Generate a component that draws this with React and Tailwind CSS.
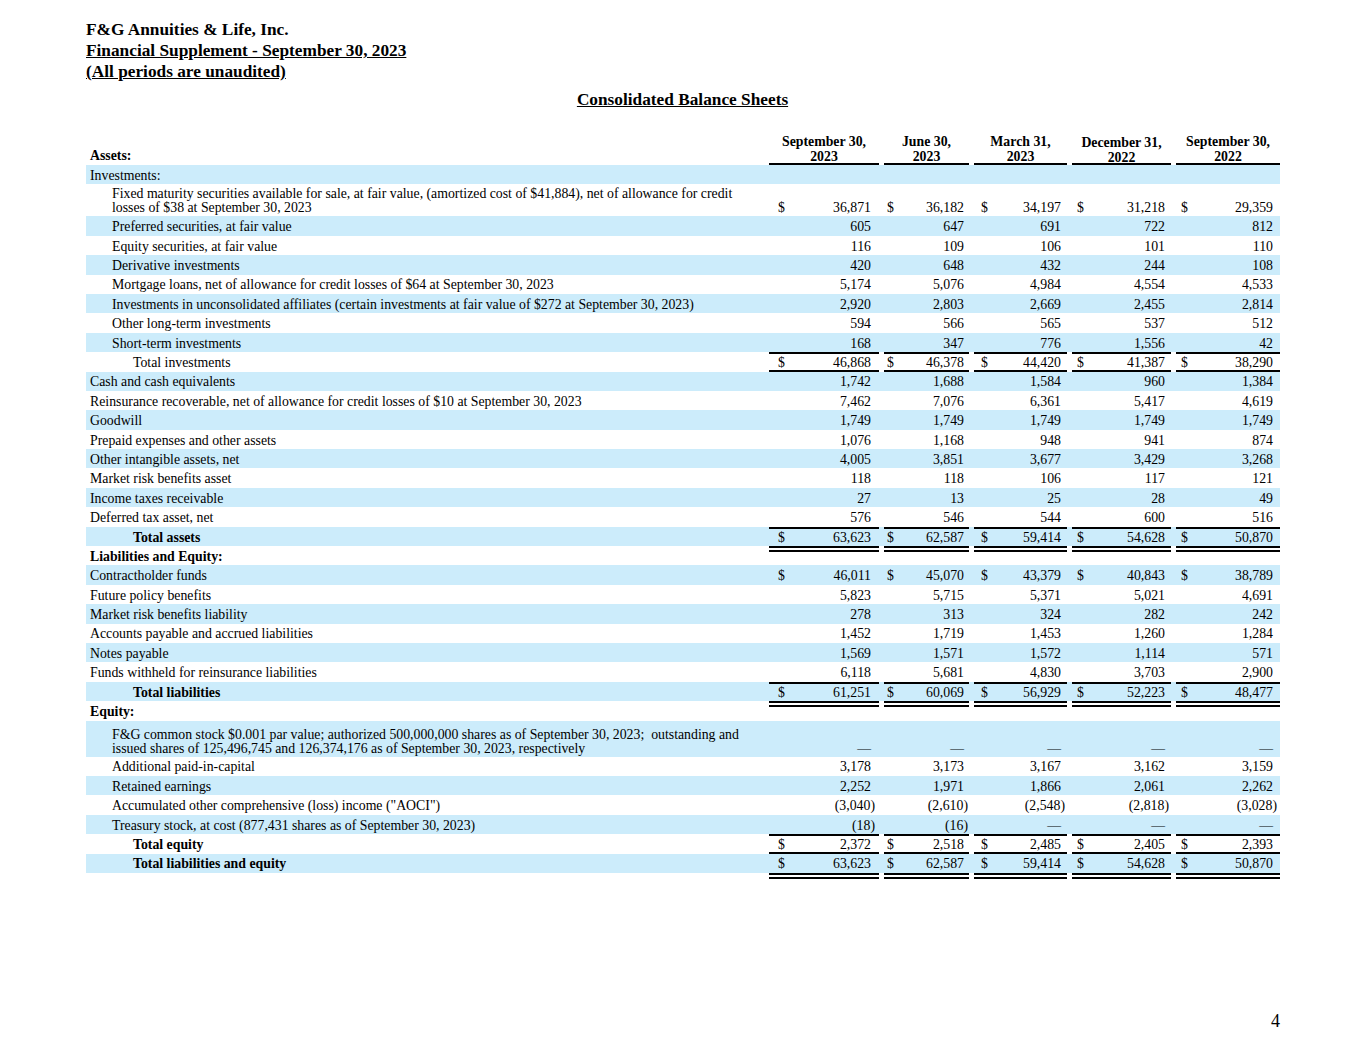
const cols = [
  { box: 'w-[110px]', pl: 'pl-[9px]', pr: 'pr-[8px]' },
  { box: 'w-[85px] ml-[5px]', pl: 'pl-[3px]', pr: 'pr-[5px]' },
  { box: 'w-[93px] ml-[5px]', pl: 'pl-[7px]', pr: 'pr-[6px]' },
  { box: 'w-[99px] ml-[5px]', pl: 'pl-[5px]', pr: 'pr-[6px]' },
  { box: 'w-[104px] ml-[5px]', pl: 'pl-[5px]', pr: 'pr-[7px]' },
]

const headers = [
  ['September 30,', '2023'],
  ['June 30,', '2023'],
  ['March 31,', '2023'],
  ['December 31,', '2022'],
  ['September 30,', '2022'],
]

const indents = ['pl-[4px]', 'pl-[26px]', 'pl-[47px]']

const rows = [
  { label: 'Investments:', indent: 0 },
  {
    label: ['Fixed maturity securities available for sale, at fair value, (amortized cost of $41,884), net of allowance for credit', 'losses of $38 at September 30, 2023'],
    indent: 1, tall: 'h-[32px]', dollar: true,
    vals: ['36,871', '36,182', '34,197', '31,218', '29,359'],
  },
  { label: 'Preferred securities, at fair value', indent: 1, vals: ['605', '647', '691', '722', '812'] },
  { label: 'Equity securities, at fair value', indent: 1, vals: ['116', '109', '106', '101', '110'] },
  { label: 'Derivative investments', indent: 1, vals: ['420', '648', '432', '244', '108'] },
  { label: 'Mortgage loans, net of allowance for credit losses of $64 at September 30, 2023', indent: 1, vals: ['5,174', '5,076', '4,984', '4,554', '4,533'] },
  { label: 'Investments in unconsolidated affiliates (certain investments at fair value of $272 at September 30, 2023)', indent: 1, vals: ['2,920', '2,803', '2,669', '2,455', '2,814'] },
  { label: 'Other long-term investments', indent: 1, vals: ['594', '566', '565', '537', '512'] },
  { label: 'Short-term investments', indent: 1, vals: ['168', '347', '776', '1,556', '42'] },
  { label: 'Total investments', indent: 2, dollar: true, top: true, bottom: 'single', vals: ['46,868', '46,378', '44,420', '41,387', '38,290'] },
  { label: 'Cash and cash equivalents', indent: 0, vals: ['1,742', '1,688', '1,584', '960', '1,384'] },
  { label: 'Reinsurance recoverable, net of allowance for credit losses of $10 at September 30, 2023', indent: 0, vals: ['7,462', '7,076', '6,361', '5,417', '4,619'] },
  { label: 'Goodwill', indent: 0, vals: ['1,749', '1,749', '1,749', '1,749', '1,749'] },
  { label: 'Prepaid expenses and other assets', indent: 0, vals: ['1,076', '1,168', '948', '941', '874'] },
  { label: 'Other intangible assets, net', indent: 0, vals: ['4,005', '3,851', '3,677', '3,429', '3,268'] },
  { label: 'Market risk benefits asset', indent: 0, vals: ['118', '118', '106', '117', '121'] },
  { label: 'Income taxes receivable', indent: 0, vals: ['27', '13', '25', '28', '49'] },
  { label: 'Deferred tax asset, net', indent: 0, vals: ['576', '546', '544', '600', '516'] },
  { label: 'Total assets', indent: 2, bold: true, dollar: true, top: true, bottom: 'double', vals: ['63,623', '62,587', '59,414', '54,628', '50,870'] },
  { label: 'Liabilities and Equity:', indent: 0, bold: true },
  { label: 'Contractholder funds', indent: 0, dollar: true, vals: ['46,011', '45,070', '43,379', '40,843', '38,789'] },
  { label: 'Future policy benefits', indent: 0, vals: ['5,823', '5,715', '5,371', '5,021', '4,691'] },
  { label: 'Market risk benefits liability', indent: 0, vals: ['278', '313', '324', '282', '242'] },
  { label: 'Accounts payable and accrued liabilities', indent: 0, vals: ['1,452', '1,719', '1,453', '1,260', '1,284'] },
  { label: 'Notes payable', indent: 0, vals: ['1,569', '1,571', '1,572', '1,114', '571'] },
  { label: 'Funds withheld for reinsurance liabilities', indent: 0, vals: ['6,118', '5,681', '4,830', '3,703', '2,900'] },
  { label: 'Total liabilities', indent: 2, bold: true, dollar: true, top: true, bottom: 'double', vals: ['61,251', '60,069', '56,929', '52,223', '48,477'] },
  { label: 'Equity:', indent: 0, bold: true },
  {
    label: ['F&G common stock $0.001 par value; authorized 500,000,000 shares as of September 30, 2023;\u00a0 outstanding and', 'issued shares of 125,496,745 and 126,374,176 as of September 30, 2023, respectively'],
    indent: 1, tall: 'h-[36px]',
    vals: ['—', '—', '—', '—', '—'],
  },
  { label: 'Additional paid-in-capital', indent: 1, vals: ['3,178', '3,173', '3,167', '3,162', '3,159'] },
  { label: 'Retained earnings', indent: 1, vals: ['2,252', '1,971', '1,866', '2,061', '2,262'] },
  { label: 'Accumulated other comprehensive (loss) income ("AOCI")', indent: 1, vals: ['(3,040)', '(2,610)', '(2,548)', '(2,818)', '(3,028)'] },
  { label: 'Treasury stock, at cost (877,431 shares as of September 30, 2023)', indent: 1, vals: ['(18)', '(16)', '—', '—', '—'] },
  { label: 'Total equity', indent: 2, bold: true, dollar: true, top: true, bottom: 'single', vals: ['2,372', '2,518', '2,485', '2,405', '2,393'] },
  { label: 'Total liabilities and equity', indent: 2, bold: true, dollar: true, bottom: 'double', vals: ['63,623', '62,587', '59,414', '54,628', '50,870'] },
]

const Value = ({ v }) => {
  if (v.startsWith('(')) return <span className="-mr-[4px]">{v}</span>
  return <span>{v}</span>
}

const Row = ({ r, shade }) => {
  const tall = !!r.tall
  const valAlign = tall
    ? 'items-end pb-[1px] leading-[14px]'
    : r.top && r.bottom === 'double'
      ? 'items-center pt-[1px]'
      : 'items-center pt-[3px]'
  return (
    <div className={`flex ${r.tall || 'h-[19.4px]'} ${shade ? 'bg-[#ccecfb]' : ''}`}>
      <div
        className={`w-[683px] shrink-0 flex ${tall ? 'items-end pb-[1px] leading-[14px]' : 'items-center pt-[3px]'} ${indents[r.indent]} ${r.bold ? 'font-bold' : ''}`}
      >
        {Array.isArray(r.label) ? (
          <div>
            {r.label[0]}
            <br />
            {r.label[1]}
          </div>
        ) : (
          r.label
        )}
      </div>
      {r.vals &&
        cols.map((c, i) => (
          <div
            key={i}
            className={`${c.box} ${c.pl} ${c.pr} shrink-0 flex justify-between ${valAlign} ${r.top ? 'border-t-2 border-black' : ''} ${r.bottom === 'single' ? 'border-b-2 border-black' : ''} ${r.bottom === 'double' ? 'h-[25.4px] border-b-[6px] border-double border-black' : ''}`}
          >
            <span>{r.dollar ? '$' : ''}</span>
            <Value v={r.vals[i]} />
          </div>
        ))}
    </div>
  )
}

export default function App() {
  return (
    <div className="w-[1365px] min-h-[1055px] bg-white text-black font-['Liberation_Serif',serif]">
      <div className="pl-[86px] pt-[19px] text-[17.3px] leading-[21px] font-bold">
        <div>F&amp;G Annuities &amp; Life, Inc.</div>
        <div className="underline">Financial Supplement - September 30, 2023</div>
        <div className="underline">(All periods are unaudited)</div>
      </div>
      <div className="mt-[7px] text-center text-[17.3px] leading-[21px] font-bold underline">
        Consolidated Balance Sheets
      </div>

      <div className="ml-[86px] w-[1194px] text-[13.8px]">
        <div className="flex items-end h-[55px]">
          <div className="w-[683px] shrink-0 pl-[4px] pb-[2px] leading-[15px] font-bold">Assets:</div>
          {cols.map((c, i) => (
            <div key={i} className={`${c.box} shrink-0 border-b-2 border-black text-center font-bold leading-[15px]`}>
              <div className={i === 3 ? 'translate-y-[2px]' : 'translate-y-[1px]'}>
                <div>{headers[i][0]}</div>
                <div>{headers[i][1]}</div>
              </div>
            </div>
          ))}
        </div>
        {rows.map((r, i) => (
          <Row key={i} r={r} shade={i % 2 === 0} />
        ))}
      </div>

      <div className="mt-[138px] w-[1280px] text-right text-[18px] leading-[20px]">4</div>
    </div>
  )
}
